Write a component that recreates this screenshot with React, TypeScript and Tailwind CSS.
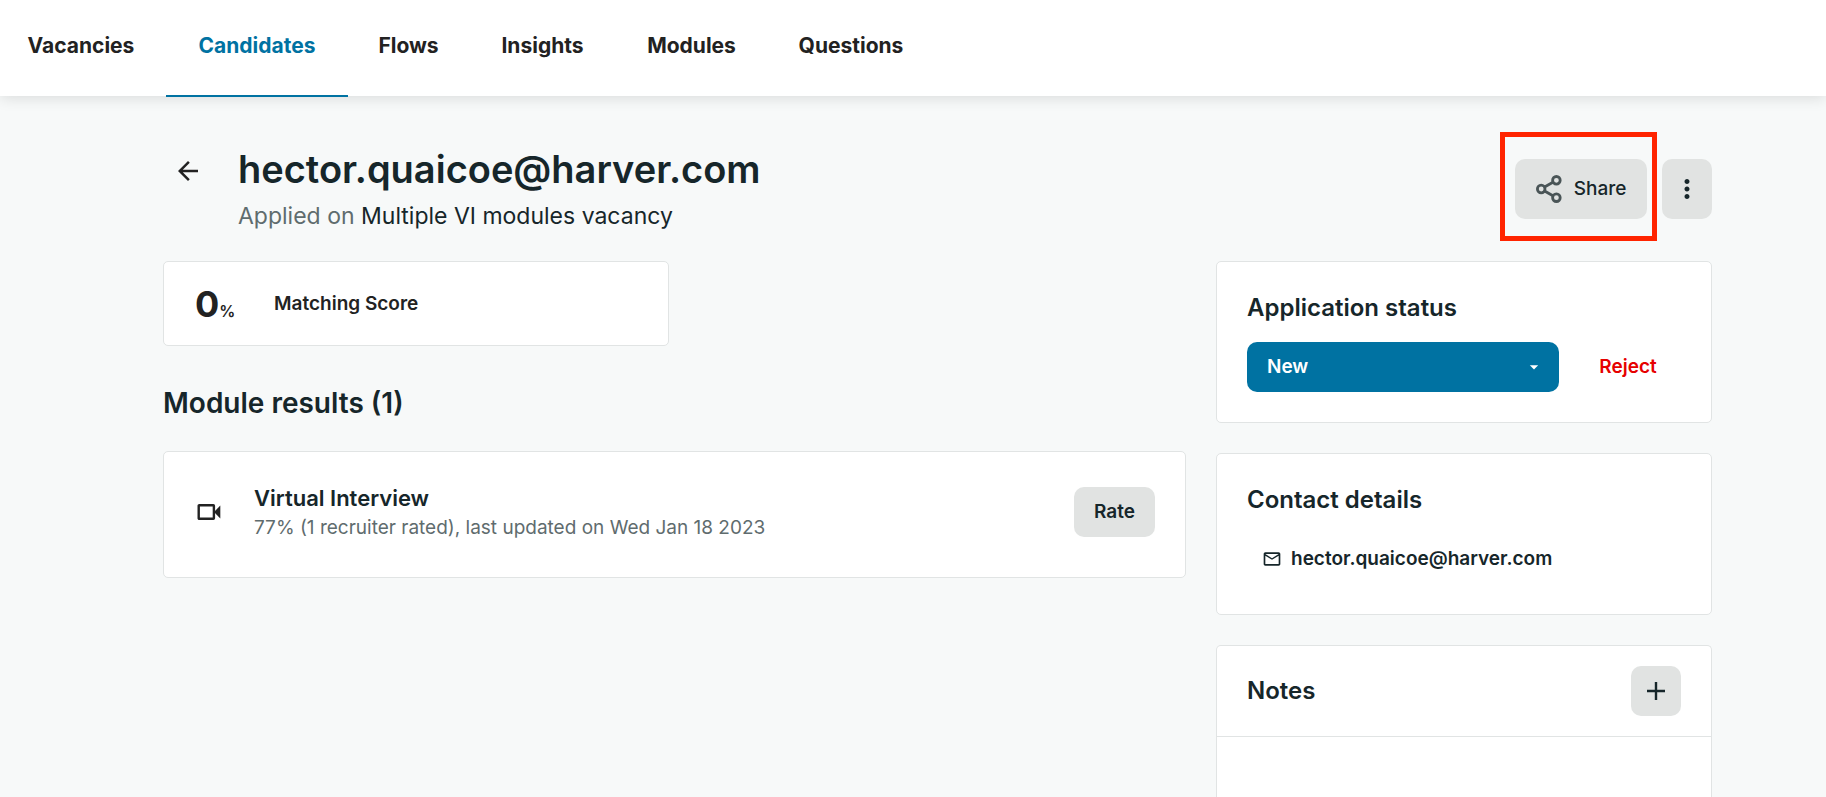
import { useState } from "react"
import { MdArrowBack, MdArrowDropDown, MdMoreVert, MdOutlineMailOutline } from "react-icons/md"

const tabs = [
    { name: "Vacancies", width: "w-[162px]" },
    { name: "Candidates", width: "w-[182px]" },
    { name: "Flows", width: "w-[121px]" },
    { name: "Insights", width: "w-[147px]" },
    { name: "Modules", width: "w-[151px]" },
    { name: "Questions", width: "w-[168px]" },
]

function TopNav() {
    const [active, setActive] = useState<string>("Candidates")

    return (
        <nav className="flex h-24 bg-white shadow-[0_2px_14px_rgba(0,0,0,0.12)]">
            {tabs.map((tab) => (
                <a
                    key={tab.name}
                    href="#"
                    onClick={() => setActive(tab.name)}
                    className={`flex h-[97px] shrink-0 justify-center border-b-2 pt-8 text-[21px] leading-7 font-bold first:mr-1 ${tab.width} ${active === tab.name ? "border-[#0072a2] text-[#0072a2]" : "border-transparent text-[#222222]"}`}
                >
                    {tab.name}
                </a>
            ))}
        </nav>
    )
}

function ShareIcon() {
    return (
        <svg width="26" height="28" viewBox="0 0 26 28" fill="none" stroke="#4a5557" strokeWidth="2.8">
            <circle cx="5.2" cy="14" r="3.8" />
            <circle cx="20.4" cy="5.3" r="3.8" />
            <circle cx="20.4" cy="22.7" r="3.8" />
            <path d="M8.6 12 16.9 7.3M8.6 16l8.3 4.7" />
        </svg>
    )
}

function VideoIcon() {
    return (
        <svg width="24" height="16" viewBox="0 0 24 16">
            <rect x="1.7" y="1.2" width="15.2" height="13.6" rx="0.5" fill="none" stroke="#222222" strokeWidth="2.4" />
            <path d="M17 8 23.3 1.5v13z" fill="#222222" />
        </svg>
    )
}

function PageHeader() {
    return (
        <header className="flex items-start justify-between">
            <div className="flex">
                <a href="#" aria-label="Back" className="ml-[10px] flex h-[54px] w-[65px] items-center text-[#222222]">
                    <MdArrowBack className="size-[30px]" />
                </a>
                <div>
                    <h1 className="text-[38px] leading-[50px] font-semibold">hector.quaicoe@harver.com</h1>
                    <p className="text-[23px] leading-[44px] text-[#5f6c6e]">
                        Applied on <a href="#" className="text-[#16262a]">Multiple VI modules vacancy</a>
                    </p>
                </div>
            </div>
            <div className="mt-[15px] flex gap-[15px]">
                <div className="relative">
                    <button className="flex h-[60px] w-[132px] items-center justify-center gap-3 rounded-[10px] bg-[#e1e3e2] text-[19px] font-medium">
                        <ShareIcon />
                        Share
                    </button>
                    <div className="pointer-events-none absolute -top-[27px] -right-[10px] -bottom-[22px] -left-[15px] border-5 border-[#ff2400]" />
                </div>
                <button aria-label="More actions" className="flex h-[60px] w-[50px] items-center justify-center rounded-[10px] bg-[#e1e3e2]">
                    <MdMoreVert className="size-[30px]" />
                </button>
            </div>
        </header>
    )
}

function Results() {
    return (
        <section className="min-w-0 flex-1">
            <article className="flex h-[85px] max-w-[506px] items-center rounded-[5px] border border-[#e1e4e4] bg-white px-[31px] pt-[2px] text-[#222222]">
                <p className="w-[79px] text-[36px] leading-none font-bold">
                    0<span className="text-base font-semibold">%</span>
                </p>
                <p className="text-[19px] font-semibold">Matching Score</p>
            </article>

            <h2 className="mt-[37px] mb-[28px] text-[28px] leading-10 font-semibold">Module results (1)</h2>

            <article className="flex h-[127px] items-center rounded-[5px] border border-[#e1e4e4] bg-white pr-[30px] pl-[33px] pb-[5px]">
                <div className="w-[57px]">
                    <VideoIcon />
                </div>
                <div className="flex-1">
                    <h3 className="text-[22px] leading-8 font-semibold">Virtual Interview</h3>
                    <p className="text-[19px] leading-7 text-[#5f6c6e]">77% (1 recruiter rated), last updated on Wed Jan 18 2023</p>
                </div>
                <button className="h-[50px] rounded-[10px] bg-[#e1e3e2] px-5 text-[19px] font-semibold">Rate</button>
            </article>
        </section>
    )
}

function Sidebar() {
    const [status, setStatus] = useState<string>("New")

    return (
        <aside className="flex w-[496px] shrink-0 flex-col gap-[30px]">
            <article className="h-[162px] rounded-[5px] border border-[#e1e4e4] bg-white px-[30px] pt-[30px]">
                <h2 className="mb-[18px] text-2xl leading-8 font-semibold">Application status</h2>
                <div className="flex items-center">
                    <div className="relative w-[312px]">
                        <select
                            aria-label="Application status"
                            value={status}
                            onChange={(e: any) => setStatus(e.target.value)}
                            className="h-[50px] w-full appearance-none rounded-[10px] bg-[#0072a2] px-5 text-[19px] font-semibold text-white"
                        >
                            <option>New</option>
                            <option>Hired</option>
                        </select>
                        <MdArrowDropDown className="pointer-events-none absolute top-[15px] right-[15px] size-5 text-white" />
                    </div>
                    <button className="flex-1 pl-4 text-[19px] font-semibold text-[#e60000]">Reject</button>
                </div>
            </article>

            <article className="h-[162px] rounded-[5px] border border-[#e1e4e4] bg-white px-[30px] pt-[30px]">
                <h2 className="mb-[29px] text-2xl leading-8 font-semibold">Contact details</h2>
                <a href="mailto:hector.quaicoe@harver.com" className="flex items-center gap-[9px] pl-[15px] text-[19px] leading-7 font-semibold">
                    <MdOutlineMailOutline className="size-5" />
                    hector.quaicoe@harver.com
                </a>
            </article>

            <article className="flex flex-1 flex-col rounded-t-[5px] border border-b-0 border-[#e1e4e4] bg-white">
                <div className="flex items-center justify-between border-b border-[#e1e4e4] px-[30px] py-5">
                    <h2 className="text-2xl leading-8 font-semibold">Notes</h2>
                    <button aria-label="Add note" className="flex size-[50px] items-center justify-center rounded-[10px] bg-[#e1e3e2]">
                        <svg width="18" height="18" viewBox="0 0 18 18" stroke="#16262a" strokeWidth="2.4">
                            <path d="M9 0v18M0 9h18" />
                        </svg>
                    </button>
                </div>
            </article>
        </aside>
    )
}

export default function App() {
    return (
        <div className="flex min-h-screen flex-col bg-[#f7f9f9] font-['Inter',sans-serif] text-[#16262a]">
            <TopNav />
            <main className="flex flex-1 flex-col pt-12 pr-[114px] pl-[163px]">
                <PageHeader />
                <div className="mt-[23px] flex flex-1 gap-[30px]">
                    <Results />
                    <Sidebar />
                </div>
            </main>
        </div>
    )
}
